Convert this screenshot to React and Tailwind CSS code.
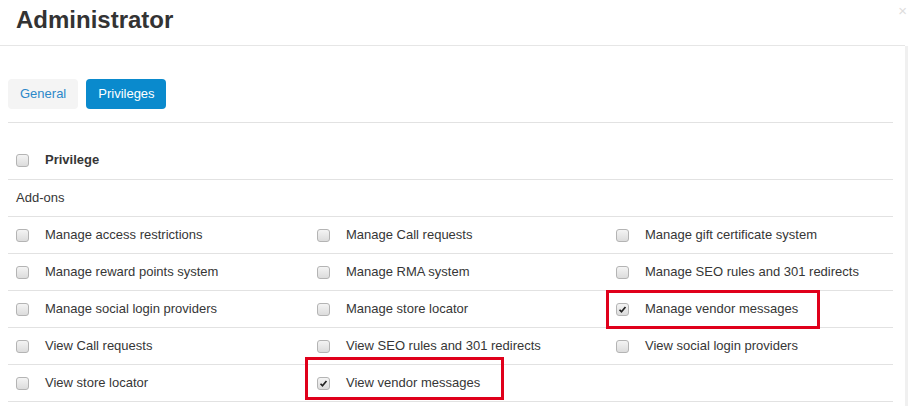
import React from "react";

const rows = [
  ["Manage access restrictions", "Manage Call requests", "Manage gift certificate system"],
  ["Manage reward points system", "Manage RMA system", "Manage SEO rules and 301 redirects"],
  ["Manage social login providers", "Manage store locator", "Manage vendor messages"],
  ["View Call requests", "View SEO rules and 301 redirects", "View social login providers"],
  ["View store locator", "View vendor messages", ""],
];

const checked = ["Manage vendor messages", "View vendor messages"];

function Box({ on }) {
  return (
    <span className="relative inline-block w-[13px] h-[13px] rounded-[3px] border border-[#b4b4b4] bg-gradient-to-b from-[#f4f4f4] to-[#dcdcdc] shrink-0">
      {on && (
        <svg viewBox="0 0 13 13" className="absolute inset-0 w-full h-full">
          <path d="M3 6.8 L5.3 9.2 L10 3.6" fill="none" stroke="#222" strokeWidth="2" />
        </svg>
      )}
    </span>
  );
}

export default function App() {
  return (
    <div className="relative w-[908px] h-[406px] bg-white overflow-hidden text-[#363636] text-[13px] [font-family:'Liberation_Sans',Arial,sans-serif]">
      {/* HEADER */}
      <div className="h-[46px] border-b border-[#e6e6e6] flex items-center pl-4 pr-1 mr-[3px]">
        <h1 className="text-[24px] font-bold text-[#333] leading-none -mt-[5px] flex-1">Administrator</h1>
      </div>
      <span className="absolute right-[1px] top-[3px] text-[#ddd] text-[15px] leading-none">×</span>
      <div className="absolute right-0 top-[46px] bottom-0 w-[3px] bg-[#f0f0f0]" />

      {/* TABS */}
      <div className="pl-2 pt-[33px] flex gap-2">
        <button className="h-[30px] px-3 rounded-[4px] bg-[#f4f4f4] text-[#2c88c9] text-[13px]">General</button>
        <button className="h-[30px] pl-3 pr-[11px] rounded-[4px] bg-[#0a8acd] text-white text-[13px]">Privileges</button>
      </div>
      <div className="ml-2 w-[885px] mt-[13px] border-t border-[#e2e2e2]" />

      {/* TABLE */}
      <div className="ml-2 w-[885px] mt-[18px]">
        <div className="h-[39px] flex items-center pl-2 border-b border-[#e2e2e2]">
          <Box />
          <span className="ml-4 font-bold">Privilege</span>
        </div>
        <div className="h-[37px] flex items-center pl-2 border-b border-[#e2e2e2]">Add-ons</div>
        {rows.map((r, i) => (
          <div key={i} className="h-[37px] grid grid-cols-[301px_299px_1fr] border-b border-[#e2e2e2]">
            {r.map((t, j) => (
              <div key={j} className="flex items-center pl-2">
                {t && (
                  <>
                    <Box on={checked.includes(t)} />
                    <span className="ml-4">{t}</span>
                  </>
                )}
              </div>
            ))}
          </div>
        ))}
      </div>

      {/* highlight boxes */}
      <div className="absolute left-[606px] top-[290px] w-[214px] h-[39px] border-[3px] border-[#e0001b]" />
      <div className="absolute left-[305px] top-[357px] w-[199px] h-[43px] border-[3px] border-[#e0001b]" />
    </div>
  );
}
